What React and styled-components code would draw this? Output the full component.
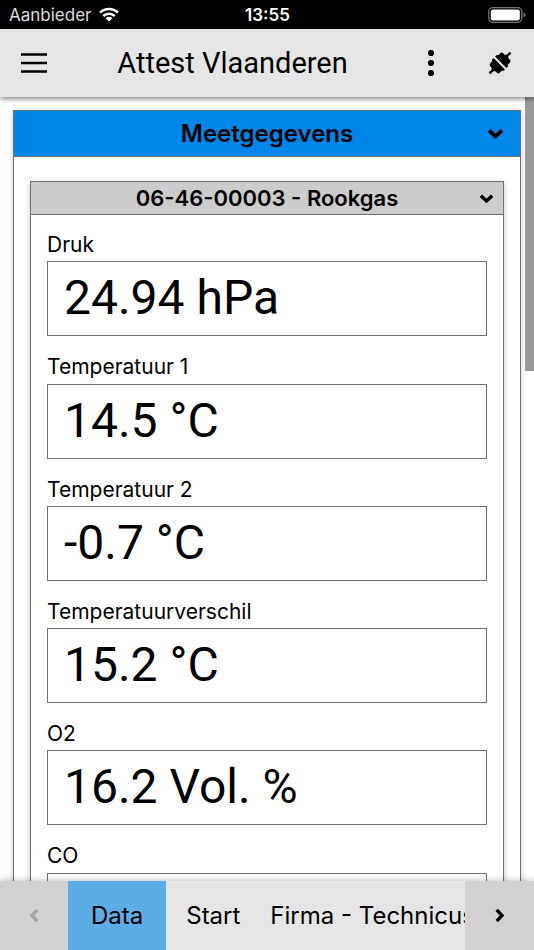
import React from "react";
import styled, { createGlobalStyle } from "styled-components";

const GlobalStyle = createGlobalStyle`
  *, *::before, *::after { box-sizing: border-box; }
  body {
    margin: 0;
    background: #fff;
    color: #000;
    font-family: Inter, "Liberation Sans", sans-serif;
  }
  button, input { font: inherit; color: inherit; }
`;

const displayFont = `Roboto, "Liberation Sans", sans-serif`;

const Screen = styled.div`
  display: flex;
  flex-direction: column;
  height: 100vh;
  overflow: hidden;
`;

const StatusBar = styled.div`
  flex: none;
  display: grid;
  grid-template-columns: 1fr auto 1fr;
  align-items: center;
  height: 29px;
  padding: 0 8px 0 9px;
  background: #000;
  color: #fff;
  font-size: 17px;
`;

const Carrier = styled.div`
  display: flex;
  align-items: center;
  gap: 8px;
  color: #dcdcdc;
`;

const Clock = styled.time`
  font-weight: 600;
`;

const Battery = styled.svg`
  justify-self: end;
`;

const AppBar = styled.header`
  flex: none;
  position: relative;
  z-index: 1;
  display: grid;
  grid-template-columns: 68px 1fr 68px 69px;
  align-items: stretch;
  height: 68px;
  background: #e5e5e5;
  box-shadow: 0 1px 6px rgba(0, 0, 0, 0.6);
`;

const IconButton = styled.button`
  display: flex;
  align-items: center;
  justify-content: center;
  padding: 0;
  border: 0;
  background: none;
`;

const Title = styled.h1`
  margin: 0;
  align-self: center;
  text-align: center;
  font-family: ${displayFont};
  font-size: 29px;
  font-weight: 400;
  white-space: nowrap;
`;

const Body = styled.div`
  flex: 1;
  min-height: 0;
  display: grid;
  grid-template-columns: 1fr 9px;
`;

const Content = styled.main`
  min-width: 0;
  overflow: hidden;
  padding: 13px 4px 0 13px;
`;

const ScrollTrack = styled.div`
  height: 100%;
`;

const ScrollThumb = styled.div`
  height: 35%;
  background: #999;
`;

const Panel = styled.section`
  border: 1px solid #707070;
  background: #fff;
  box-shadow: 0 2px 6px rgba(0, 0, 0, 0.22);
`;

const PanelHeader = styled.button`
  display: grid;
  grid-template-columns: 32px 1fr 32px;
  align-items: center;
  justify-items: center;
  width: 100%;
  height: ${(p) => (p.$primary ? 46 : 33)}px;
  padding: 0 ${(p) => (p.$primary ? 9 : 1)}px;
  border: 0;
  border-bottom: 1px solid #707070;
  background: ${(p) => (p.$primary ? "#0086e8" : "#ccc")};
  font-size: ${(p) => (p.$primary ? 24 : 22)}px;
  font-weight: 600;
`;

const PanelTitle = styled.span`
  grid-column: 2;
`;

const PanelBody = styled.div`
  padding: 24px 16px;
`;

const FieldList = styled.div`
  display: flex;
  flex-direction: column;
  gap: 17px;
  padding: 16px 16px 24px;
`;

const Field = styled.div`
  display: flex;
  flex-direction: column;
  gap: 3px;
`;

const FieldLabel = styled.label`
  font-size: 21px;
  line-height: 1.3;
`;

const FieldValue = styled.input`
  width: 100%;
  height: 75px;
  padding: 0 16px 2px;
  border: 1px solid #707070;
  border-radius: 0;
  background: #fff;
  && { font-family: ${displayFont}; }
  font-size: 48px;
  outline: none;
`;

const TabBar = styled.nav`
  flex: none;
  position: relative;
  z-index: 1;
  display: grid;
  grid-template-columns: 68px 1fr 69px;
  height: 69px;
  background: #e5e5e5;
  box-shadow: 0 0 7px rgba(0, 0, 0, 0.3);
`;

const Pager = styled(IconButton)`
  background: #d2d2d2;
  color: #000;
  &:disabled { color: #a5a5a5; }
`;

const Tabs = styled.div`
  display: flex;
  min-width: 0;
  overflow: hidden;
`;

const Tab = styled.button`
  flex: none;
  padding: 0 ${(p) => (p.$active ? 23 : 20)}px;
  margin-right: ${(p) => (p.$active ? 0 : -10)}px;
  border: 0;
  background: ${(p) => (p.$active ? "#5cace5" : "transparent")};
  font-size: 24px;
  white-space: nowrap;
`;

const Chevron = ({ size = 16, turn = 0 }) => (
  <svg width={size} height={size} viewBox="0 0 16 16" aria-hidden="true">
    <path
      d="M2 5 8 10.700l6-5.700"
      transform={`rotate(${turn} 8 8)`}
      fill="none"
      stroke="currentColor"
      strokeWidth="3.600"
    />
  </svg>
);

const WifiIcon = () => (
  <svg width="20" height="15" viewBox="0 0 20 15" aria-hidden="true">
    <g fill="none" stroke="#fff" strokeWidth="2.500">
      <path d="M1.100 5.600a12.700 12.700 0 0 1 17.800 0" />
      <path d="M4.300 9a8.200 8.200 0 0 1 11.400 0" />
    </g>
    <path d="M10 14.600 6.500 11.200a5 5 0 0 1 7 0z" fill="#fff" />
  </svg>
);

const PlugIcon = () => (
  <svg width="26" height="26" viewBox="0 0 26 26" aria-hidden="true">
    <g transform="rotate(45 13 13)">
      <path d="M5 11.900h16V9.200h-1.200V6.200q0-2.400-2.400-2.400h-1.800L14.200 2.400V-1.800h-2.400v4.200L10.400 3.800H8.600q-2.400 0-2.400 2.400v3H5z" />
      <path d="M5 14.100h16v2.700h-1.200v3q0 2.400-2.400 2.400h-1.800l-1.400 1.400v4.200h-2.400v-4.200l-1.400-1.400H8.600q-2.400 0-2.400-2.400v-3H5z" />
    </g>
  </svg>
);

const readings = [
  { id: "druk", label: "Druk", value: "24.94 hPa" },
  { id: "temp1", label: "Temperatuur 1", value: "14.5 °C" },
  { id: "temp2", label: "Temperatuur 2", value: "-0.7 °C" },
  { id: "verschil", label: "Temperatuurverschil", value: "15.2 °C" },
  { id: "o2", label: "O2", value: "16.2 Vol. %" },
  { id: "co", label: "CO", value: "" },
];

const tabs = ["Data", "Start", "Firma - Technicus"];

export default function App() {
  return (
    <Screen>
      <GlobalStyle />
      <StatusBar>
        <Carrier>
          Aanbieder
          <WifiIcon />
        </Carrier>
        <Clock>13:55</Clock>
        <Battery width="38" height="16" viewBox="0 0 38 16" aria-hidden="true">
          <rect x="0.800" y="0.700" width="33" height="14.600" rx="4" fill="none" stroke="#777" strokeWidth="1.300" />
          <rect x="2.800" y="2.500" width="29" height="11" rx="2" fill="#fff" />
          <path d="M35.500 5.500q2 .8 2 2.500t-2 2.500z" fill="#777" />
        </Battery>
      </StatusBar>

      <AppBar>
        <IconButton aria-label="Menu">
          <svg width="26" height="20" viewBox="0 0 26 20" aria-hidden="true">
            <path d="M0 1.500h26M0 10h26M0 18.500h26" stroke="#000" strokeWidth="2.600" />
          </svg>
        </IconButton>
        <Title>Attest Vlaanderen</Title>
        <IconButton aria-label="Meer">
          <svg width="8" height="28" viewBox="0 0 8 28" aria-hidden="true">
            <circle cx="4" cy="4" r="3.100" />
            <circle cx="4" cy="14" r="3.100" />
            <circle cx="4" cy="24" r="3.100" />
          </svg>
        </IconButton>
        <IconButton aria-label="Verbinding">
          <PlugIcon />
        </IconButton>
      </AppBar>

      <Body>
        <Content>
          <Panel>
            <PanelHeader $primary aria-expanded="true">
              <PanelTitle>Meetgegevens</PanelTitle>
              <Chevron size={17} />
            </PanelHeader>
            <PanelBody>
              <Panel>
                <PanelHeader aria-expanded="true">
                  <PanelTitle>06-46-00003 - Rookgas</PanelTitle>
                  <Chevron size={15} />
                </PanelHeader>
                <FieldList>
                  {readings.map((r) => (
                    <Field key={r.id}>
                      <FieldLabel htmlFor={r.id}>{r.label}</FieldLabel>
                      <FieldValue id={r.id} type="text" readOnly value={r.value} />
                    </Field>
                  ))}
                </FieldList>
              </Panel>
            </PanelBody>
          </Panel>
        </Content>
        <ScrollTrack>
          <ScrollThumb />
        </ScrollTrack>
      </Body>

      <TabBar>
        <Pager disabled aria-label="Vorige">
          <Chevron size={15} turn={90} />
        </Pager>
        <Tabs>
          {tabs.map((name, i) => (
            <Tab key={name} $active={i === 0}>
              {name}
            </Tab>
          ))}
        </Tabs>
        <Pager aria-label="Volgende">
          <Chevron size={15} turn={-90} />
        </Pager>
      </TabBar>
    </Screen>
  );
}
